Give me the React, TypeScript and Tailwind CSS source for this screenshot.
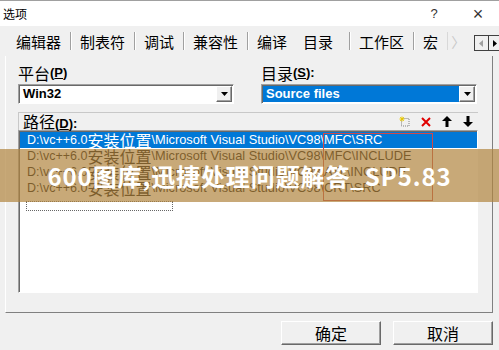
import React from "react";

const Sep = () => <span className="block shrink-0 w-px h-[18px] bg-[#a0a0a0] shadow-[1px_0_0_#ffffff]" />;

const DropBtn = () => (
  <div className="w-[16px] h-full flex items-center justify-center bg-[#f0f0f0] border border-t-white border-l-white border-r-[#696969] border-b-[#696969] shadow-[inset_-1px_-1px_0_#a0a0a0]">
    <svg width="7" height="4" viewBox="0 0 7 4">
      <polygon points="0,0 7,0 3.5,4" fill="#000" />
    </svg>
  </div>
);

const Row = ({ tail, selected }: { tail: string; selected?: boolean }) => (
  <div
    className={
      "h-[16px] flex items-center pl-[7px] whitespace-nowrap " +
      (selected ? "bg-[#0078d7] text-white" : "text-black")
    }
  >
    <span className="text-[12.5px] leading-none">D:\vc++6.0</span>
    <span className="text-[16px] leading-none font-['Noto_Sans_CJK_SC',sans-serif]">安装位置</span>
    <span className="text-[12.8px] leading-none">{"\\Microsoft Visual Studio\\VC98\\" + tail}</span>
  </div>
);

const Tab = ({ children, className = "" }: { children: React.ReactNode; className?: string }) => (
  <span className={"shrink-0 whitespace-nowrap leading-none " + className}>{children}</span>
);

export default function App() {
  return (
    <div className="relative w-[499px] h-[350px] overflow-hidden bg-[#f0f0f0] border-t border-[#a0a0a0] font-['Liberation_Sans','Noto_Sans_CJK_SC',sans-serif] text-black">
      {/* title bar */}
      <div className="h-[25px] bg-white flex items-center pl-[3px] pr-[14px]">
        <span className="text-[12px] font-['Noto_Sans_CJK_SC',sans-serif]">选项</span>
        <div className="ml-auto flex items-center gap-[32px]">
          <span className="w-[10px] text-center text-[13px] text-[#333]">?</span>
          <span className="w-[14px] text-center text-[18px] leading-none font-light text-[#333]">×</span>
        </div>
      </div>

      {/* tab strip */}
      <div className="h-[30px] flex items-center pl-[16px] pr-[6px] gap-[9px] text-[15px] font-['Noto_Sans_CJK_SC',sans-serif] whitespace-nowrap">
        <Tab>编辑器</Tab>
        <Sep />
        <Tab>制表符</Tab>
        <Sep />
        <Tab>调试</Tab>
        <Sep />
        <Tab>兼容性</Tab>
        <Sep />
        <Tab>编译</Tab>
        <Tab className="px-[7px]">目录</Tab>
        <Sep />
        <Tab>工作区</Tab>
        <Sep />
        <Tab>宏</Tab>
        <span className="block shrink-0 w-px h-[18px] bg-[#d8d8d8]" />
        <Tab className="text-[#c8c8c8] text-[14px] -ml-[6px]">〉</Tab>
        <div className="ml-auto mt-[4px] shrink-0 flex h-[16px] w-[28px] border border-[#404040] bg-[#f0f0f0]">
          <div className="flex-1 flex items-center justify-center border-r border-[#404040]">
            <svg width="4" height="7" viewBox="0 0 4 7"><polygon points="4,0 4,7 0,3.5" fill="#a0a0a0" /></svg>
          </div>
          <div className="flex-1 flex items-center justify-center">
            <svg width="4" height="7" viewBox="0 0 4 7"><polygon points="0,0 0,7 4,3.5" fill="#000" /></svg>
          </div>
        </div>
      </div>

      {/* tab page */}
      <div className="ml-[5px] w-[488px] h-[257px] border-l border-white border-r border-b border-r-[#808080] border-b-[#808080] pl-[12px] pt-[8px]">
        <div className="flex gap-[27px]">
          <div className="w-[216px]">
            <div className="h-[18px] flex items-center text-[16px] font-['Noto_Sans_CJK_SC',sans-serif]">
              平台<span className="text-[13px] font-bold font-['Liberation_Sans',sans-serif]">(<u>P</u>)</span>
            </div>
            <div className="mt-[2px] h-[20px] flex bg-white border border-t-[#a0a0a0] border-l-[#a0a0a0] border-r-white border-b-white shadow-[inset_1px_1px_0_#696969] p-[1px]">
              <div className="flex-1 flex items-center pl-[3px] text-[13px] font-bold">Win32</div>
              <DropBtn />
            </div>
          </div>
          <div className="w-[216px]">
            <div className="h-[18px] flex items-center text-[16px] font-['Noto_Sans_CJK_SC',sans-serif]">
              目录<span className="text-[13px] font-bold font-['Liberation_Sans',sans-serif]">(<u>S</u>):</span>
            </div>
            <div className="mt-[2px] h-[20px] flex bg-white border border-t-[#a0a0a0] border-l-[#a0a0a0] border-r-white border-b-white shadow-[inset_1px_1px_0_#696969] p-[1px]">
              <div className="flex-1 flex items-center pl-[3px] text-[13px] font-bold bg-[#0078d7] text-white">Source files</div>
              <DropBtn />
            </div>
          </div>
        </div>

        {/* path group */}
        <div className="mt-[8px] w-[460px] border-t border-[#c8c8c8]">
          <div className="h-[17px] flex items-center pl-[4px] pr-[5px] border-l border-[#c8c8c8]">
            <span className="text-[16px] leading-none font-['Noto_Sans_CJK_SC',sans-serif]">
              路径<span className="text-[13px] font-bold font-['Liberation_Sans',sans-serif]">(<u>D</u>):</span>
            </span>
            <div className="ml-auto flex items-center gap-[11px]">
              <svg width="11" height="11" viewBox="0 0 11 11">
                <rect x="2.5" y="2.5" width="7.5" height="7.5" fill="none" stroke="#808080" strokeDasharray="1 1" />
                <path d="M3 0.5 V5.5 M0.5 3 H5.5 M1.2 1.2 L4.8 4.8 M4.8 1.2 L1.2 4.8" stroke="#e8c800" strokeWidth="1" />
              </svg>
              <svg width="10" height="10" viewBox="0 0 10 10">
                <path d="M1 1 L9 9 M9 1 L1 9" stroke="#e00000" strokeWidth="2" />
              </svg>
              <svg width="10" height="11" viewBox="0 0 10 11">
                <polygon points="0,5 5,0 10,5" fill="#000" />
                <rect x="3.5" y="5" width="3" height="6" fill="#000" />
              </svg>
              <svg width="10" height="11" viewBox="0 0 10 11">
                <polygon points="0,6 5,11 10,6" fill="#000" />
                <rect x="3.5" y="0" width="3" height="6" fill="#000" />
              </svg>
            </div>
          </div>
          <div className="h-[163px] bg-white border border-t-[#a0a0a0] border-l-[#a0a0a0] border-r-white border-b-white shadow-[inset_1px_1px_0_#696969] pt-[1px] pl-[1px]">
            <Row tail="MFC\SRC" selected />
            <Row tail="MFC\INCLUDE" />
            <Row tail="ATL\INCLUDE" />
            <Row tail="CRT\SRC" />
            <div className="h-[16px] pl-[6px]">
              <div className="mt-[5px] w-[147px] h-[10px] border border-dotted border-[#666]" />
            </div>
          </div>
        </div>
      </div>

      {/* buttons */}
      <div className="flex justify-end gap-[12px] pr-[6px] pt-[8px] text-[16px] font-['Noto_Sans_CJK_SC',sans-serif]">
        <button className="w-[100px] h-[24px] flex items-center justify-center bg-[#f0f0f0] border border-t-white border-l-white border-r-[#696969] border-b-[#696969] shadow-[inset_-1px_-1px_0_#a0a0a0]">确定</button>
        <button className="w-[100px] h-[24px] flex items-center justify-center bg-[#f0f0f0] border border-t-white border-l-white border-r-[#696969] border-b-[#696969] shadow-[inset_-1px_-1px_0_#a0a0a0]">取消</button>
      </div>

      {/* annotation rectangle */}
      <div className="absolute left-[323px] top-[132px] w-[110px] h-[68px] border-[1.5px] border-[#d04848]" />

      {/* watermark band */}
      <div className="absolute left-0 top-[148px] w-full h-[53px] bg-[rgba(176,133,62,0.7)] flex items-center justify-center">
        <span className="whitespace-nowrap text-white font-bold text-[24px] tracking-[0.9px] leading-none font-['Noto_Sans_CJK_SC',sans-serif]">
          600图库,迅捷处理问题解答_SP5.83
        </span>
      </div>
    </div>
  );
}
